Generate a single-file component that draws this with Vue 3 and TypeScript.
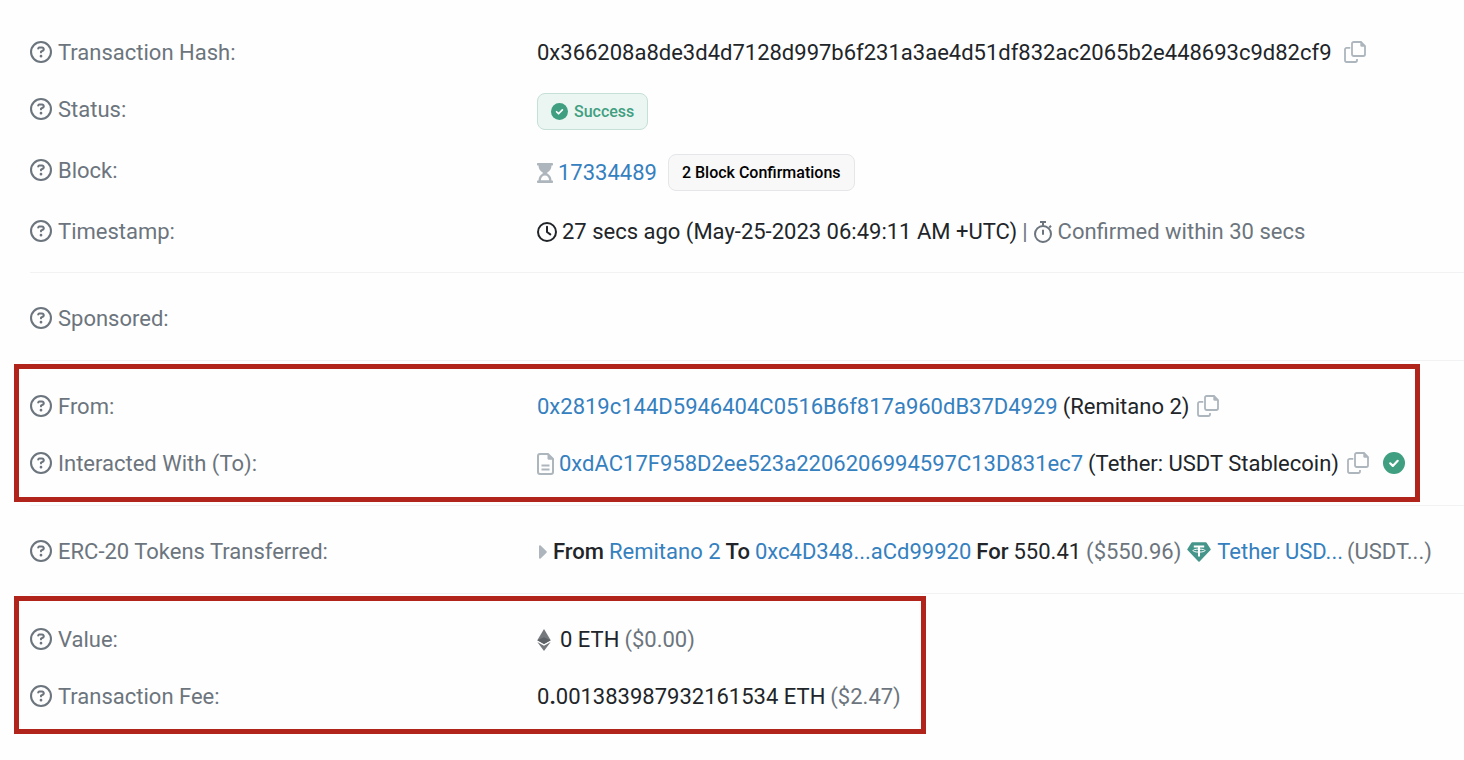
<script setup lang="ts">
interface Row {
  id: string
  label: string
}
interface Section {
  rows: Row[]
  highlight?: 'wide' | 'narrow'
}

const sections: Section[] = [
  {
    rows: [
      { id: 'hash', label: 'Transaction Hash:' },
      { id: 'status', label: 'Status:' },
      { id: 'block', label: 'Block:' },
      { id: 'time', label: 'Timestamp:' },
    ],
  },
  { rows: [{ id: 'sponsored', label: 'Sponsored:' }] },
  {
    rows: [
      { id: 'from', label: 'From:' },
      { id: 'to', label: 'Interacted With (To):' },
    ],
    highlight: 'wide',
  },
  { rows: [{ id: 'tokens', label: 'ERC-20 Tokens Transferred:' }] },
  {
    rows: [
      { id: 'value', label: 'Value:' },
      { id: 'fee', label: 'Transaction Fee:' },
    ],
    highlight: 'narrow',
  },
]
</script>

<template>
  <svg class="defs" aria-hidden="true">
    <symbol id="i-help" viewBox="0 0 512 512">
      <path d="M464 256A208 208 0 1 0 48 256a208 208 0 1 0 416 0zM0 256a256 256 0 1 1 512 0A256 256 0 1 1 0 256zm169.8-90.7c7.9-22.3 29.1-37.3 52.8-37.3h58.3c34.9 0 63.1 28.3 63.1 63.1c0 22.6-12.1 43.5-31.7 54.8L280 264.4c-.2 13-10.9 23.6-24 23.6c-13.3 0-24-10.7-24-24V250.5c0-8.6 4.6-16.5 12.1-20.8l44.3-25.4c4.7-2.7 7.6-7.7 7.6-13.1c0-8.4-6.8-15.1-15.1-15.1H222.6c-3.4 0-6.4 2.1-7.5 5.3l-.4 1.2c-4.4 12.5-18.2 19-30.6 14.6s-19-18.2-14.6-30.6l.4-1.2zM224 352a32 32 0 1 1 64 0 32 32 0 1 1 -64 0z" />
    </symbol>
    <symbol id="i-copy" viewBox="0 0 22 22">
      <path d="M9.7 1H17l4 4v8.3a1.7 1.7 0 0 1-1.7 1.7H9.7a1.7 1.7 0 0 1-1.7-1.7V2.7A1.7 1.7 0 0 1 9.7 1z" fill="none" stroke="currentColor" stroke-width="1.8" />
      <path d="M16.3.5L21.500 5.7H17.8a1.5 1.5 0 0 1-1.5-1.5z" />
      <path d="M6.3 6.9H2.7A1.7 1.7 0 0 0 1 8.6v10.7A1.7 1.7 0 0 0 2.7 21h8.6a1.7 1.7 0 0 0 1.7-1.7v-1.2" fill="none" stroke="currentColor" stroke-width="1.8" />
    </symbol>
    <symbol id="i-check" viewBox="0 0 22 22">
      <circle cx="11" cy="11" r="11" />
      <path d="M7.2 11.3l2.6 2.6 4.9-5.1" fill="none" stroke="#fff" stroke-width="2.2" stroke-linecap="round" stroke-linejoin="round" />
    </symbol>
  </svg>

  <main class="page">
    <section v-for="(section, i) in sections" :key="i" class="section">
      <dl class="rows">
        <div v-for="row in section.rows" :key="row.id" class="row">
          <dt class="label">
            <svg class="icon help" aria-hidden="true"><use href="#i-help" /></svg>
            <span>{{ row.label }}</span>
          </dt>

          <dd v-if="row.id === 'hash'" class="detail">
            <span>0x366208a8de3d4d7128d997b6f231a3ae4d51df832ac2065b2e448693c9d82cf9</span>
            <button class="copy far" type="button" aria-label="Copy transaction hash">
              <svg class="icon"><use href="#i-copy" /></svg>
            </button>
          </dd>

          <dd v-else-if="row.id === 'status'" class="detail">
            <span class="badge success">
              <svg class="badge-icon" aria-hidden="true"><use href="#i-check" /></svg>
              <span>Success</span>
            </span>
          </dd>

          <dd v-else-if="row.id === 'block'" class="detail">
            <svg class="glyph hourglass" viewBox="0 0 16 20" aria-hidden="true">
              <path fill-rule="evenodd" d="M.8 0H15.2a.8.8 0 0 1 .8.8v.9a.8.8 0 0 1-.8.8H14.5C14.5 6 12.5 8.3 9.8 10c2.7 1.7 4.7 4 4.7 7.5h.7a.8.8 0 0 1 .8.8v.9a.8.8 0 0 1-.8.8H.8a.8.8 0 0 1-.8-.8v-.9a.8.8 0 0 1 .8-.8h.7C1.5 14 3.5 11.700 6.2 10 3.5 8.3 1.5 6 1.5 2.5H.8A.8.8 0 0 1 0 1.7V.8A.8.8 0 0 1 .8 0zM3.800 17.2h8.4C11.9 14.5 10.3 12.6 8 12.6S4.1 14.5 3.8 17.2z" />
            </svg>
            <a class="link" href="#block">17334489</a>
            <span class="badge neutral">2 Block Confirmations</span>
          </dd>

          <dd v-else-if="row.id === 'time'" class="detail">
            <svg class="glyph clock" viewBox="0 0 20 20" aria-hidden="true">
              <circle cx="10" cy="10" r="9" />
              <path d="M10 4.8V10l3.3 2.4" />
            </svg>
            <span>27 secs ago (May-25-2023 06:49:11 AM +UTC)</span>
            <span class="muted bar">|</span>
            <svg class="glyph stopwatch" viewBox="0 0 20 22" aria-hidden="true">
              <circle cx="10" cy="13" r="8" />
              <path d="M10 8.8v5M10 1v3.500M7 1h6M16.3 6.5l1.7-1.7" />
            </svg>
            <span class="muted">Confirmed within 30 secs</span>
          </dd>

          <dd v-else-if="row.id === 'from'" class="detail">
            <a class="link" href="#from">0x2819c144D5946404C0516B6f817a960dB37D4929</a>
            <span class="word">(Remitano 2)</span>
            <button class="copy" type="button" aria-label="Copy sender address">
              <svg class="icon"><use href="#i-copy" /></svg>
            </button>
          </dd>

          <dd v-else-if="row.id === 'to'" class="detail">
            <svg class="glyph file" viewBox="0 0 17 22" aria-hidden="true">
              <path class="line" d="M3 1h8l5 5v13a2 2 0 0 1-2 2H3a2 2 0 0 1-2-2V3a2 2 0 0 1 2-2zM4.500 12.5h8M4.500 16.5h8" />
              <path d="M10.5.5L16.5 6.7H12a1.5 1.5 0 0 1-1.5-1.5z" />
            </svg>
            <a class="link" href="#to">0xdAC17F958D2ee523a2206206994597C13D831ec7</a>
            <span class="word">(Tether: USDT Stablecoin)</span>
            <button class="copy" type="button" aria-label="Copy contract address">
              <svg class="icon"><use href="#i-copy" /></svg>
            </button>
            <svg class="icon verified" role="img" aria-label="Verified"><use href="#i-check" /></svg>
          </dd>

          <dd v-else-if="row.id === 'tokens'" class="detail">
            <svg class="glyph caret" viewBox="0 0 8 14" aria-hidden="true">
              <path d="M0 1.2C0 .3 1 0 1.6.6L7.5 6.3a1 1 0 0 1 0 1.4L1.6 13.4C1 14 0 13.7 0 12.8z" />
            </svg>
            <strong>From</strong>
            <a class="link word" href="#remitano">Remitano 2</a>
            <strong class="word">To</strong>
            <a class="link word" href="#recipient">0xc4D348...aCd99920</a>
            <strong class="word">For</strong>
            <span class="word">550.41</span>
            <span class="word muted">($550.96)</span>
            <svg class="glyph tether" viewBox="0 0 24 20" aria-hidden="true">
              <path d="M5.2.3H18.8a1 1 0 0 1 .8.4l4 6.2a.9.9 0 0 1-.1 1.1L12.6 19.6a.9.9 0 0 1-1.2 0L.5 8a.9.9 0 0 1-.1-1.1L4.400.7a1 1 0 0 1 .8-.4z" />
              <path class="mark" d="M6.8 4.4h10.4M12 4.4v10" />
              <ellipse class="ring" cx="12" cy="8.6" rx="6" ry="1.5" />
            </svg>
            <a class="link" href="#tether">Tether USD...</a>
            <span class="muted tight">(USDT...)</span>
          </dd>

          <dd v-else-if="row.id === 'value'" class="detail">
            <svg class="glyph eth" viewBox="0 0 14 22" aria-hidden="true">
              <path d="M7 0L13.7 11.2 7 15 .3 11.2z" />
              <path d="M.3 12.9L7 16.7l6.7-3.8L7 22z" />
              <path class="facet" d="M7 8.2L13.7 11.2 7 15 .3 11.2z" />
            </svg>
            <span>0 ETH</span>
            <span class="word muted">($0.00)</span>
          </dd>

          <dd v-else-if="row.id === 'fee'" class="detail">
            <span>0<b>.</b>001383987932161534 ETH</span>
            <span class="word muted">($2.47)</span>
          </dd>
        </div>
      </dl>
      <div v-if="section.highlight" class="highlight" :class="section.highlight"></div>
    </section>
  </main>
</template>

<style>
body {
  margin: 0;
  background: #fefefe;
}
</style>

<style scoped>
.defs {
  position: absolute;
  width: 0;
  height: 0;
}
.page {
  padding: 7px 0 0 30px;
  font-family: Roboto, "Liberation Sans", sans-serif;
  font-size: 22px;
  line-height: 33px;
  color: #212529;
  overflow: hidden;
}
.section {
  position: relative;
  padding: 29px 0 25px;
  border-bottom: 1px solid #f1f2f4;
}
.section:first-child {
  padding-bottom: 24px;
}
.section:last-child {
  border-bottom: 0;
}
.rows {
  display: flex;
  flex-direction: column;
  gap: 24px;
  margin: 0;
}
.row {
  display: grid;
  grid-template-columns: 507px minmax(0, 1fr);
  align-items: start;
}
.label {
  display: flex;
  align-items: center;
  gap: 6px;
  color: #6c757d;
}
.detail {
  display: flex;
  align-items: center;
  margin: 0;
  white-space: nowrap;
}
.icon {
  flex: none;
  display: block;
  width: 22px;
  height: 22px;
  margin-bottom: 2px;
  fill: currentColor;
}
.copy {
  margin: 0 0 0 8px;
  padding: 0;
  border: 0;
  background: none;
  color: #adb5bd;
  cursor: pointer;
}
.copy.far {
  margin-left: 12px;
}
.link {
  color: #3580bf;
  text-decoration: none;
}
.muted {
  color: #6c757d;
}
.word {
  margin-left: 5px;
}
.bar {
  margin: 0 5px;
}
.tight {
  margin-left: 4px;
}
strong {
  font-weight: 500;
}
.badge {
  display: flex;
  align-items: center;
  box-sizing: border-box;
  height: 37px;
  padding: 0 13px;
  border: 1px solid #e4e6e9;
  border-radius: 8px;
  font-size: 16px;
  font-weight: 500;
}
.success {
  gap: 6px;
  color: #3f9f80;
  background: #ebf5f2;
  border-color: #c4e0d8;
}
.badge-icon {
  width: 17px;
  height: 17px;
  fill: currentColor;
}
.neutral {
  margin-left: 11px;
  color: #000;
  background: #f8f8f8;
}
.glyph {
  flex: none;
  fill: currentColor;
}
.hourglass {
  width: 16px;
  height: 20px;
  margin-right: 5px;
  color: #adb5bd;
}
.clock {
  width: 20px;
  height: 20px;
  margin-right: 5px;
  fill: none;
  stroke: currentColor;
  stroke-width: 2;
  stroke-linecap: round;
  stroke-linejoin: round;
}
.stopwatch {
  width: 20px;
  height: 22px;
  margin-right: 5px;
  color: #6c757d;
  fill: none;
  stroke: currentColor;
  stroke-width: 2;
}
.file {
  width: 17px;
  height: 22px;
  margin-right: 5px;
  color: #adb5bd;
}
.file .line {
  fill: none;
  stroke: currentColor;
  stroke-width: 2;
}
.verified {
  margin-left: 14px;
  color: #3f9f80;
}
.caret {
  width: 8px;
  height: 14px;
  margin: 0 6px 0 2px;
  color: #adb5bd;
}
.tether {
  width: 24px;
  height: 20px;
  margin: 0 6px;
  color: #45958a;
}
.tether .mark {
  fill: none;
  stroke: #fff;
  stroke-width: 2;
}
.tether .ring {
  fill: none;
  stroke: #fff;
  stroke-width: 1;
}
.eth {
  width: 14px;
  height: 22px;
  margin-right: 9px;
  color: #75797e;
}
.eth .facet {
  fill: #5e6267;
}
.highlight {
  position: absolute;
  top: 3px;
  left: -16px;
  height: 138px;
  box-sizing: border-box;
  border: 5px solid #b0241c;
  pointer-events: none;
}
.highlight.wide {
  right: 44px;
}
.highlight.narrow {
  top: 2px;
  width: 912px;
}
</style>
